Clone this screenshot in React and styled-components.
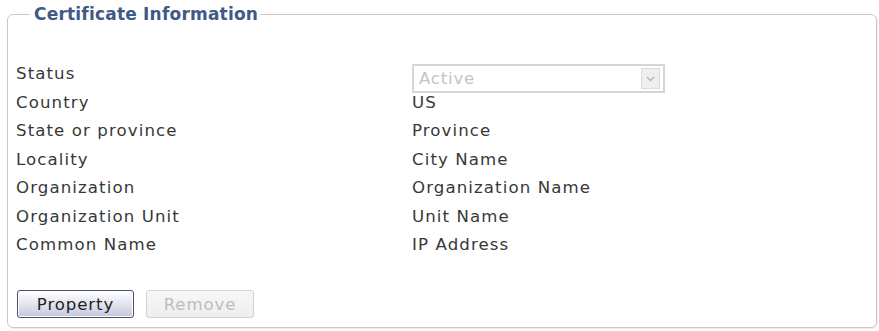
import React from "react";
import styled, { createGlobalStyle } from "styled-components";

const Global = createGlobalStyle`
  html, body { margin: 0; padding: 0; background: #fff; }
  body { font-family: "DejaVu Sans", Verdana, sans-serif; }
`;

const Page = styled.div`
  width: 879px;
  height: 331px;
  box-sizing: border-box;
  padding: 3px 3px 0 7px;
  background: #fff;
`;

const Fieldset = styled.fieldset`
  margin: 0;
  box-sizing: border-box;
  width: 870px;
  height: 325px;
  border: 1px solid #c9c9c9;
  border-radius: 6px;
  padding: 35px 8px 8px 8px;
  display: flex;
  flex-direction: column;
  box-shadow: 1px 1px 1px rgba(0,0,0,0.08);
`;

const Legend = styled.legend`
  margin-left: 14px;
  padding: 0 2px 0 4px;
  font-size: 17px;
  letter-spacing: 0.2px;
  font-weight: bold;
  line-height: 22px;
  color: #3f5a86;
`;

const Grid = styled.div`
  display: grid;
  grid-template-columns: 396px 1fr;
  grid-auto-rows: 28.5px;
  align-items: center;
`;

const Label = styled.div`
  font-size: 16.6px;
  letter-spacing: 1.1px;
  color: #383838;
  line-height: 22px;
`;

const Value = styled(Label)``;

const SelectBox = styled.div`
  align-self: start;
  margin-top: 4px;
  width: 253px;
  height: 29px;
  box-sizing: border-box;
  border: 2px solid #d6d6d6;
  background: #fff;
  display: flex;
  align-items: center;
  justify-content: space-between;
  padding: 0 3px 0 5px;
  font-size: 16.6px;
  letter-spacing: 0.8px;
  color: #c4c4c4;
`;

const Arrow = styled.div`
  width: 17px;
  height: 19px;
  background: #eeeeee;
  border: 1px solid #dcdcdc;
  display: flex;
  align-items: center;
  justify-content: center;
`;

const Buttons = styled.div`
  margin-top: auto;
  display: flex;
  gap: 12px;
  padding-left: 1px;
  margin-bottom: 1px;
`;

const Button = styled.button`
  height: 28px;
  width: ${(p) => p.$w}px;
  box-sizing: border-box;
  font-family: "DejaVu Sans", Verdana, sans-serif;
  font-size: 16.6px;
  letter-spacing: 0.9px;
  padding: 0;
  border-radius: 3px;
  border: 1px solid ${(p) => (p.disabled ? "#d4d4d4" : "#4b4f6b")};
  color: ${(p) => (p.disabled ? "#bdbdbd" : "#222")};
  background: ${(p) =>
    p.disabled
      ? "linear-gradient(#f7f7f7, #eeeeee)"
      : "linear-gradient(#ffffff 0%, #e6e7f1 45%, #c5c8dc 100%)"};
  box-shadow: ${(p) => (p.disabled ? "none" : "inset 0 0 0 1px #fff")};
`;

const rows = [
  ["Country", "US"],
  ["State or province", "Province"],
  ["Locality", "City Name"],
  ["Organization", "Organization Name"],
  ["Organization Unit", "Unit Name"],
  ["Common Name", "IP Address"],
];

export default function App() {
  return (
    <>
      <Global />
      <Page>
        <Fieldset>
          <Legend>Certificate Information</Legend>
          <Grid>
            <Label>Status</Label>
            <SelectBox>
              <span>Active</span>
              <Arrow>
                <svg width="9" height="6" viewBox="0 0 9 6">
                  <path d="M1 1 L4.5 4.5 L8 1" fill="none" stroke="#b5b5b5" strokeWidth="1.4" />
                </svg>
              </Arrow>
            </SelectBox>
            {rows.map(([l, v]) => (
              <React.Fragment key={l}>
                <Label>{l}</Label>
                <Value>{v}</Value>
              </React.Fragment>
            ))}
          </Grid>
          <Buttons>
            <Button $w={117}>Property</Button>
            <Button $w={108} disabled>Remove</Button>
          </Buttons>
        </Fieldset>
      </Page>
    </>
  );
}
